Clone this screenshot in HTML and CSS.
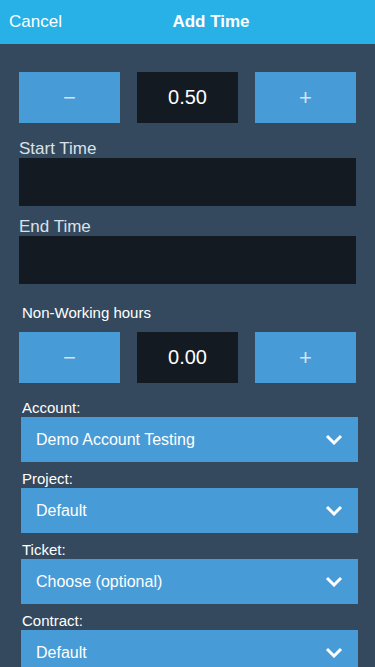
FILE: index.html
```html
<!DOCTYPE html>
<html lang="en">
<head>
  <meta charset="UTF-8">
  <meta name="viewport" content="width=device-width, initial-scale=1.0">
  <title>Add Time</title>
  <link rel="stylesheet" href="styles.css">
</head>
<body>

  <div id="header">
    <div id="cancel">Cancel</div>
    <div id="title">Add Time</div>
  </div>

  <div id="content">
    <div class="stepper">
      <div class="step-btn">&minus;</div>
      <div class="step-value">0.50</div>
      <div class="step-btn">+</div>
    </div>

    <div class="time-label">Start Time</div>
    <input class="time-input" type="text">

    <div class="time-label">End Time</div>
    <input class="time-input" type="text">

    <div id="nonWorking">Non-Working hours</div>
    <div class="stepper">
      <div class="step-btn">&minus;</div>
      <div class="step-value">0.00</div>
      <div class="step-btn">+</div>
    </div>

    <div id="fields">
      <div class="field-label">Account:</div>
      <div class="select">
        <span>Demo Account Testing</span>
        <svg class="chevron" width="18" height="11" viewBox="0 0 18 11"><path d="M2 2 L9 9 L16 2" fill="none" stroke="#fff" stroke-width="3"/></svg>
      </div>

      <div class="field-label">Project:</div>
      <div class="select">
        <span>Default</span>
        <svg class="chevron" width="18" height="11" viewBox="0 0 18 11"><path d="M2 2 L9 9 L16 2" fill="none" stroke="#fff" stroke-width="3"/></svg>
      </div>

      <div class="field-label">Ticket:</div>
      <div class="select">
        <span>Choose (optional)</span>
        <svg class="chevron" width="18" height="11" viewBox="0 0 18 11"><path d="M2 2 L9 9 L16 2" fill="none" stroke="#fff" stroke-width="3"/></svg>
      </div>

      <div class="field-label">Contract:</div>
      <div class="select">
        <span>Default</span>
        <svg class="chevron" width="18" height="11" viewBox="0 0 18 11"><path d="M2 2 L9 9 L16 2" fill="none" stroke="#fff" stroke-width="3"/></svg>
      </div>
    </div>
  </div>

</body>
</html>
```

FILE: styles.css
```css
* {
  margin: 0;
  padding: 0;
  box-sizing: border-box;
}

body {
  font-family: "Liberation Sans", Arial, sans-serif;
  background-color: #34495e;
  color: #fff;
  height: 667px;
  overflow: hidden;
}

#header {
  height: 44px;
  background-color: #27b1e6;
  display: flex;
  align-items: center;
  padding: 0 15px 0 9px;
  font-size: 17px;
}

#title {
  flex: 1;
  text-align: center;
  font-weight: bold;
}

#content {
  padding: 28px 19px 0 19px;
}

.stepper {
  display: grid;
  grid-template-columns: repeat(3, 1fr);
  gap: 17px;
  height: 51px;
}

.step-btn {
  background-color: #479bd6;
  color: #d4e3f0;
  font-size: 22px;
  display: flex;
  align-items: center;
  justify-content: center;
  user-select: none;
}

.step-value {
  background-color: #141a22;
  font-size: 20px;
  display: flex;
  align-items: center;
  justify-content: center;
}

.time-label {
  font-size: 17px;
  line-height: 19px;
  color: #dce1e8;
  margin-top: 16px;
}

.time-label + .time-input + .time-label {
  margin-top: 11px;
}

.time-input {
  display: block;
  width: 100%;
  height: 48px;
  border: none;
  background-color: #141a22;
  color: #fff;
  font-size: 17px;
  outline: none;
}

#nonWorking {
  font-size: 15px;
  line-height: 19px;
  margin: 19px 0 10px 3px;
}

#fields {
  margin: 15px -2px 0 2px;
}

.field-label {
  font-size: 15px;
  line-height: 19px;
  padding-left: 1px;
}

.select {
  height: 45px;
  margin-bottom: 7px;
  background-color: #479bd6;
  display: flex;
  align-items: center;
  justify-content: space-between;
  padding: 0 15px;
  font-size: 16px;
}
```
